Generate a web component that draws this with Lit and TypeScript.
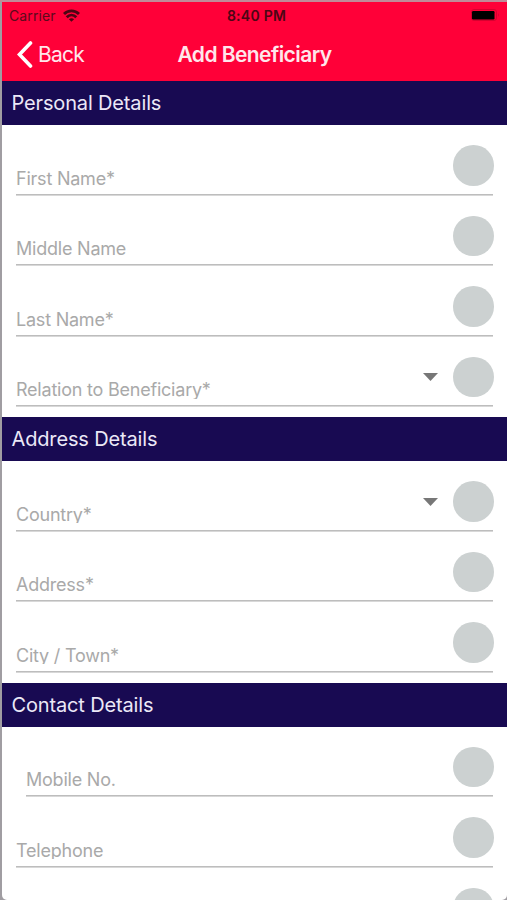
import { LitElement, html, css, nothing } from "lit";
import { customElement, property } from "lit/decorators.js";
import { classMap } from "lit/directives/class-map.js";

interface Field {
  label: string;
  select?: boolean;
  indent?: boolean;
}

interface Section {
  title: string;
  fields: Field[];
}

const SECTIONS: Section[] = [
  {
    title: "Personal Details",
    fields: [
      { label: "First Name*" },
      { label: "Middle Name" },
      { label: "Last Name*" },
      { label: "Relation to Beneficiary*", select: true },
    ],
  },
  {
    title: "Address Details",
    fields: [
      { label: "Country*", select: true },
      { label: "Address*" },
      { label: "City / Town*" },
    ],
  },
  {
    title: "Contact Details",
    fields: [
      { label: "Mobile No.", indent: true },
      { label: "Telephone" },
      { label: "" },
    ],
  },
];

@customElement("form-field")
class FormField extends LitElement {
  @property() label = "";
  @property({ type: Boolean }) select = false;
  @property({ type: Boolean }) indent = false;

  static styles = css`
    :host {
      display: block;
      height: 70.5px;
      padding: 0 14.5px 0 14px;
      box-sizing: border-box;
    }
    .row {
      display: flex;
      align-items: flex-start;
      height: 100%;
      box-sizing: border-box;
      background: linear-gradient(#bdbdbd, #bdbdbd) 0 100% / 100% 1.6px no-repeat;
    }
    .indent {
      margin-left: 10px;
    }
    .label {
      flex: 1;
      margin-top: 41.5px;
      height: 20.500px;
      line-height: 24px;
      overflow: hidden;
      white-space: nowrap;
      font-size: 18px;
      letter-spacing: -0.22px;
      color: #a9a9a9;
    }
    .arrow {
      width: 15px;
      height: 8px;
      margin: 36.5px 15.500px 0 0;
    }
    .dot {
      width: 40.500px;
      height: 40.500px;
      margin: 20px -1px 0 0;
      border-radius: 50%;
      background: #ccd1d1;
    }
  `;

  render() {
    return html`
      <div class=${classMap({ row: true, indent: this.indent })}>
        <span class="label">${this.label}</span>
        ${this.select
          ? html`<svg class="arrow" viewBox="0 0 15 8"><path d="M0 0H15L7.5 8Z" fill="#777" /></svg>`
          : nothing}
        <span class="dot"></span>
      </div>
    `;
  }
}

@customElement("app-root")
class AppRoot extends LitElement {
  static styles = css`
    :host {
      display: block;
      height: 900px;
      overflow: hidden;
      box-sizing: border-box;
      padding: 2px 0 0 2px;
      background: linear-gradient(#c08a98 0 2px, #a09da2 2px);
      font-family: Inter, "Liberation Sans", sans-serif;
    }
    .screen {
      height: 898px;
      overflow: hidden;
      background: #fff;
      border-radius: 0 0 5px 5px;
    }
    .top {
      height: 79px;
      background: #ff0038;
    }
    .status {
      display: grid;
      grid-template-columns: 1fr auto 1fr;
      align-items: center;
      height: 26px;
      padding: 0 7px;
      font-size: 14px;
      color: #5c0a1c;
    }
    .carrier {
      display: flex;
      align-items: center;
      gap: 7px;
      letter-spacing: 0.1px;
    }
    .wifi {
      width: 17px;
      height: 13px;
    }
    .time {
      padding-left: 4px;
      font-weight: 600;
      letter-spacing: 0.25px;
      color: #4c0614;
    }
    .battery {
      justify-self: end;
      width: 29px;
      height: 12px;
    }
    .nav {
      display: grid;
      grid-template-columns: 1fr auto 1fr;
      align-items: center;
      height: 52px;
      padding: 0 14px;
      color: #fff;
    }
    .back {
      display: flex;
      align-items: center;
      gap: 5px;
      font-size: 21px;
      letter-spacing: -0.8px;
      color: #ffe6eb;
    }
    .chevron {
      width: 17px;
      height: 27px;
    }
    .title {
      font-size: 21px;
      font-weight: 600;
      letter-spacing: -0.57px;
      color: #ffe6eb;
    }
    .section {
      padding-bottom: 10px;
    }
    .heading {
      height: 44px;
      line-height: 44.500px;
      padding-left: 9.500px;
      background: #180a52;
      color: #ebe8f7;
      font-size: 20px;
      letter-spacing: -0.15px;
    }
  `;

  render() {
    return html`
      <div class="screen">
        <div class="top">
          <div class="status">
            <span class="carrier">
              Carrier
              <svg class="wifi" viewBox="0 0 17 13" fill="none" stroke="#4c0614" stroke-width="2.800">
                <path d="M1 5C5 .8 12 .8 16 5" />
                <path d="M3.7 8.200C6.5 5.400 10.5 5.400 13.3 8.200" />
                <path d="M8.500 12.800L5.900 10.200C7.400 8.900 9.600 8.900 11.100 10.200Z" fill="#4c0614" stroke="none" />
              </svg>
            </span>
            <span class="time">8:40 PM</span>
            <svg class="battery" viewBox="0 0 29 12">
              <rect x=".5" y=".5" width="25" height="11" rx="2.500" fill="none" stroke="#d8002f" />
              <rect x="1" y="2" width="22.500" height="8.500" rx="1.200" fill="#000" />
              <path d="M27 4Q28.500 6 27 8Z" fill="#d00030" />
            </svg>
          </div>
          <div class="nav">
            <span class="back">
              <svg class="chevron" viewBox="0 0 17 27">
                <path d="M14.500 2L3.500 13.500L14.500 25" fill="none" stroke="#fff" stroke-width="3.600" stroke-linecap="round" />
              </svg>
              Back
            </span>
            <span class="title">Add Beneficiary</span>
          </div>
        </div>
        ${SECTIONS.map(
          (s) => html`
            <div class="section">
              <div class="heading">${s.title}</div>
              ${s.fields.map(
                (f) => html`<form-field
                  .label=${f.label}
                  .select=${!!f.select}
                  .indent=${!!f.indent}
                ></form-field>`
              )}
            </div>
          `
        )}
      </div>
    `;
  }
}
